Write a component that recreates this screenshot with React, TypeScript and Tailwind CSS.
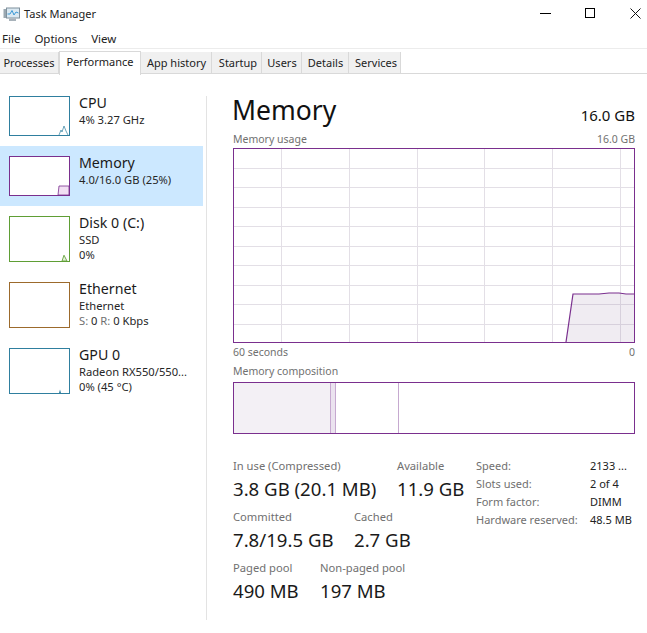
import React from "react"

const tabs = [
  { label: "Processes", w: "w-[59px]" },
  { label: "Performance", w: "w-[82px]" },
  { label: "App history", w: "w-[71px] pl-px" },
  { label: "Startup", w: "w-[50px] pl-[3px]" },
  { label: "Users", w: "w-[40px] pl-px" },
  { label: "Details", w: "w-[47px] pl-px" },
  { label: "Services", w: "w-[52px] pl-[3px]" },
]

const vLines = [48, 116, 184, 251, 319, 387]
const hLines = [20, 39, 59, 78, 98, 117, 137, 156, 176]

function Thumb({ border, h, children }: { border: string; h: string; children?: React.ReactNode }) {
  return (
    <div className={`relative w-[61px] ${h} border ${border} bg-white shrink-0 overflow-hidden`}>
      <svg className="absolute inset-0 w-full h-full" viewBox="0 0 59 38" preserveAspectRatio="none">
        {children}
      </svg>
    </div>
  )
}

function SideItem({
  title,
  thumb,
  lines,
  active,
  className,
}: {
  title: string
  thumb: React.ReactNode
  lines: React.ReactNode[]
  active?: boolean
  className: string
}) {
  return (
    <div className={`flex items-start w-[203px] pl-[9px] ${active ? "bg-[#cce8ff]" : ""} ${className}`}>
      {thumb}
      <div className="ml-[9px] -mt-[3px]">
        <div className="text-[14.2px] leading-[19px] text-[#1a1a1a]">{title}</div>
        {lines.map((l, i) => (
          <div key={i} className="text-[11.2px] leading-[15px] text-[#262626] whitespace-nowrap">
            {l}
          </div>
        ))}
      </div>
    </div>
  )
}

function Stat({ label, value, w }: { label: string; value: string; w: string }) {
  return (
    <div className={w}>
      <div className="text-[11.2px] leading-[15px] text-[#707070] whitespace-nowrap">{label}</div>
      <div className="text-[18.6px] leading-[24px] mt-[4px] text-[#1a1a1a] whitespace-nowrap">{value}</div>
    </div>
  )
}

export default function App() {
  return (
    <div className="w-[647px] h-[633px] bg-white overflow-hidden font-['Noto_Sans',sans-serif]">
      {/* Title bar */}
      <div className="flex items-center h-[30px] relative">
        <svg className="ml-[3px] w-[17px] h-[17px] -mt-[2px]" viewBox="0 0 17 17">
          <rect x="0.5" y="3" width="3" height="9" fill="#9aa7b0" />
          <rect x="3.5" y="2" width="13" height="10" fill="#dbe9f2" stroke="#7f909c" />
          <path d="M4.5 8 L7 8 L9 4.5 L11 9 L13 6 L15.5 7" fill="none" stroke="#3d9ad6" strokeWidth="1" />
          <rect x="6" y="12.5" width="7" height="2.5" fill="#a8b2ba" />
        </svg>
        <span className="ml-[4px] text-[11px] text-[#222] -mt-[2px]">Task Manager</span>
        <div className="ml-auto flex items-center h-full pb-[4px]">
          <div className="w-[11px] h-px bg-black mr-[34px]" />
          <div className="w-[10px] h-[10px] border border-black mr-[35px]" />
          <svg className="w-[11px] h-[11px] mr-[6px]" viewBox="0 0 11 11">
            <path d="M0.5 0.5 L10.5 10.5 M10.5 0.5 L0.5 10.5" stroke="#111" strokeWidth="1" />
          </svg>
        </div>
      </div>

      {/* Menu */}
      <div className="flex h-[17px] items-center pl-[2px] gap-[14px] text-[11.5px] text-[#222]">
        <span>File</span>
        <span>Options</span>
        <span>View</span>
      </div>

      {/* Tabs */}
      <div className="mt-[1px] h-[26px] border-t border-[#ececec] border-b-[#d9d9d9] border-b flex items-end">
        {tabs.map((t) =>
          t.label === "Performance" ? (
            <div
              key={t.label}
              className={`${t.w} h-[24px] -mb-px bg-white border border-b-0 border-[#d9d9d9] text-[11px] text-center leading-[20px] text-[#1a1a1a] self-start mt-[2px]`}
            >
              {t.label}
            </div>
          ) : (
            <div
              key={t.label}
              className={`${t.w} h-[21px] bg-[#f0f0f0] border-r border-[#d9d9d9] text-[11px] text-center leading-[21px] text-[#222]`}
            >
              {t.label}
            </div>
          ),
        )}
      </div>

      <div className="flex pt-[22px]">
        {/* Sidebar */}
        <div className="w-[207px] h-[524px] border-r border-[#e3e3e3] shrink-0">
          <SideItem
            className="h-[50px]"
            title="CPU"
            lines={["4%  3.27 GHz"]}
            thumb={
              <Thumb border="border-[#2f7f9f]" h="h-[40px]">
                <path d="M49 38 L51 33 L52 35 L54 29 L56 34 L58 38" fill="none" stroke="#2f7f9f" strokeWidth="0.7" />
              </Thumb>
            }
          />
          <SideItem
            className="h-[60px] pt-[10px]"
            active
            title="Memory"
            lines={["4.0/16.0 GB (25%)"]}
            thumb={
              <Thumb border="border-[#7a2f8e]" h="h-[40px]">
                <path d="M48 38 L49 29 L59 29 L59 38 Z" fill="#f1dff3" stroke="#7a2f8e" strokeWidth="0.8" />
              </Thumb>
            }
          />
          <SideItem
            className="h-[76px] pt-[10px]"
            title="Disk 0 (C:)"
            lines={["SSD", "0%"]}
            thumb={
              <Thumb border="border-[#5f9e35]" h="h-[46px]">
                <path d="M52 38 L54 33 L57 38 Z" fill="#e6f2dc" stroke="#5f9e35" strokeWidth="0.8" />
              </Thumb>
            }
          />
          <SideItem
            className="h-[66px]"
            title="Ethernet"
            lines={[
              "Ethernet",
              <>
                <span className="text-[#707070]">S:</span> 0 <span className="text-[#707070]">R:</span> 0 Kbps
              </>,
            ]}
            thumb={<Thumb border="border-[#9c6a2c]" h="h-[46px]" />}
          />
          <SideItem
            className="h-[50px]"
            title="GPU 0"
            lines={["Radeon RX550/550...", "0%  (45 °C)"]}
            thumb={
              <Thumb border="border-[#2f7f9f]" h="h-[46px]">
                <path d="M49 38 L50 35 L51 38 Z" fill="#2f7f9f" />
              </Thumb>
            }
          />
        </div>

        {/* Main panel */}
        <div className="ml-[26px] w-[402px] -mt-[9px]">
          <div className="flex items-end justify-between h-[44px] pb-[3px]">
            <span className="text-[26.5px] leading-[36px] -ml-px text-[#111]">Memory</span>
            <span className="text-[15px] leading-[22px] pb-[2px] text-[#111]">16.0 GB</span>
          </div>
          <div className="flex justify-between h-[16px] items-center text-[10.5px] text-[#707070] mt-[1px]">
            <span>Memory usage</span>
            <span>16.0 GB</span>
          </div>

          {/* Usage graph */}
          <div className="w-[402px] h-[195px] border border-[#7a2f8e] bg-white">
            <svg className="w-full h-full block" viewBox="0 0 400 193" preserveAspectRatio="none">
              {vLines.map((x) => (
                <line key={x} x1={x - 0.5} x2={x - 0.5} y1="0" y2="193" stroke="#e3dfe6" />
              ))}
              {hLines.map((y) => (
                <line key={y} x1="0" x2="400" y1={y - 0.5} y2={y - 0.5} stroke="#e3dfe6" />
              ))}
              <path
                d="M332 193 L339 145 L365 145 L375 144 L385 144 L392 145 L400 145 L400 193 Z"
                fill="#8b6f9a"
                fillOpacity="0.13"
              />
              <path d="M332 193 L339 145 L365 145 L375 144 L385 144 L392 145 L400 145" fill="none" stroke="#7a2f8e" strokeWidth="1.2" />
            </svg>
          </div>
          <div className="flex justify-between h-[20px] items-center text-[10.5px] text-[#707070]">
            <span>60 seconds</span>
            <span>0</span>
          </div>
          <div className="h-[16px] mt-[1px] flex items-center text-[10.5px] text-[#707070]">Memory composition</div>

          {/* Composition bar */}
          <div className="w-[402px] h-[52px] mt-[2px] border border-[#7a2f8e] flex bg-white">
            <div className="w-[96px] bg-[#f3f0f5]" />
            <div className="w-[6px] bg-[#ebe3ef] border-x border-[#c6a9d0]" />
            <div className="w-[63px] border-r border-[#c6a9d0]" />
          </div>

          {/* Stats */}
          <div className="flex mt-[24px]">
            <div className="w-[244px]">
              <div className="flex">
                <Stat w="w-[164px]" label="In use (Compressed)" value="3.8 GB (20.1 MB)" />
                <Stat w="w-[80px]" label="Available" value="11.9 GB" />
              </div>
              <div className="flex mt-[8px]">
                <Stat w="w-[121px]" label="Committed" value="7.8/19.5 GB" />
                <Stat w="w-[80px]" label="Cached" value="2.7 GB" />
              </div>
              <div className="flex mt-[8px]">
                <Stat w="w-[87px]" label="Paged pool" value="490 MB" />
                <Stat w="w-[100px]" label="Non-paged pool" value="197 MB" />
              </div>
            </div>
            <div className="grid grid-cols-[114px_auto] auto-rows-[18px] text-[11px] items-center whitespace-nowrap self-start -mt-px -ml-px">
              <span className="text-[#707070]">Speed:</span>
              <span className="text-[#222]">2133 ...</span>
              <span className="text-[#707070]">Slots used:</span>
              <span className="text-[#222]">2 of 4</span>
              <span className="text-[#707070]">Form factor:</span>
              <span className="text-[#222]">DIMM</span>
              <span className="text-[#707070]">Hardware reserved:</span>
              <span className="text-[#222]">48.5 MB</span>
            </div>
          </div>
        </div>
      </div>
    </div>
  )
}
